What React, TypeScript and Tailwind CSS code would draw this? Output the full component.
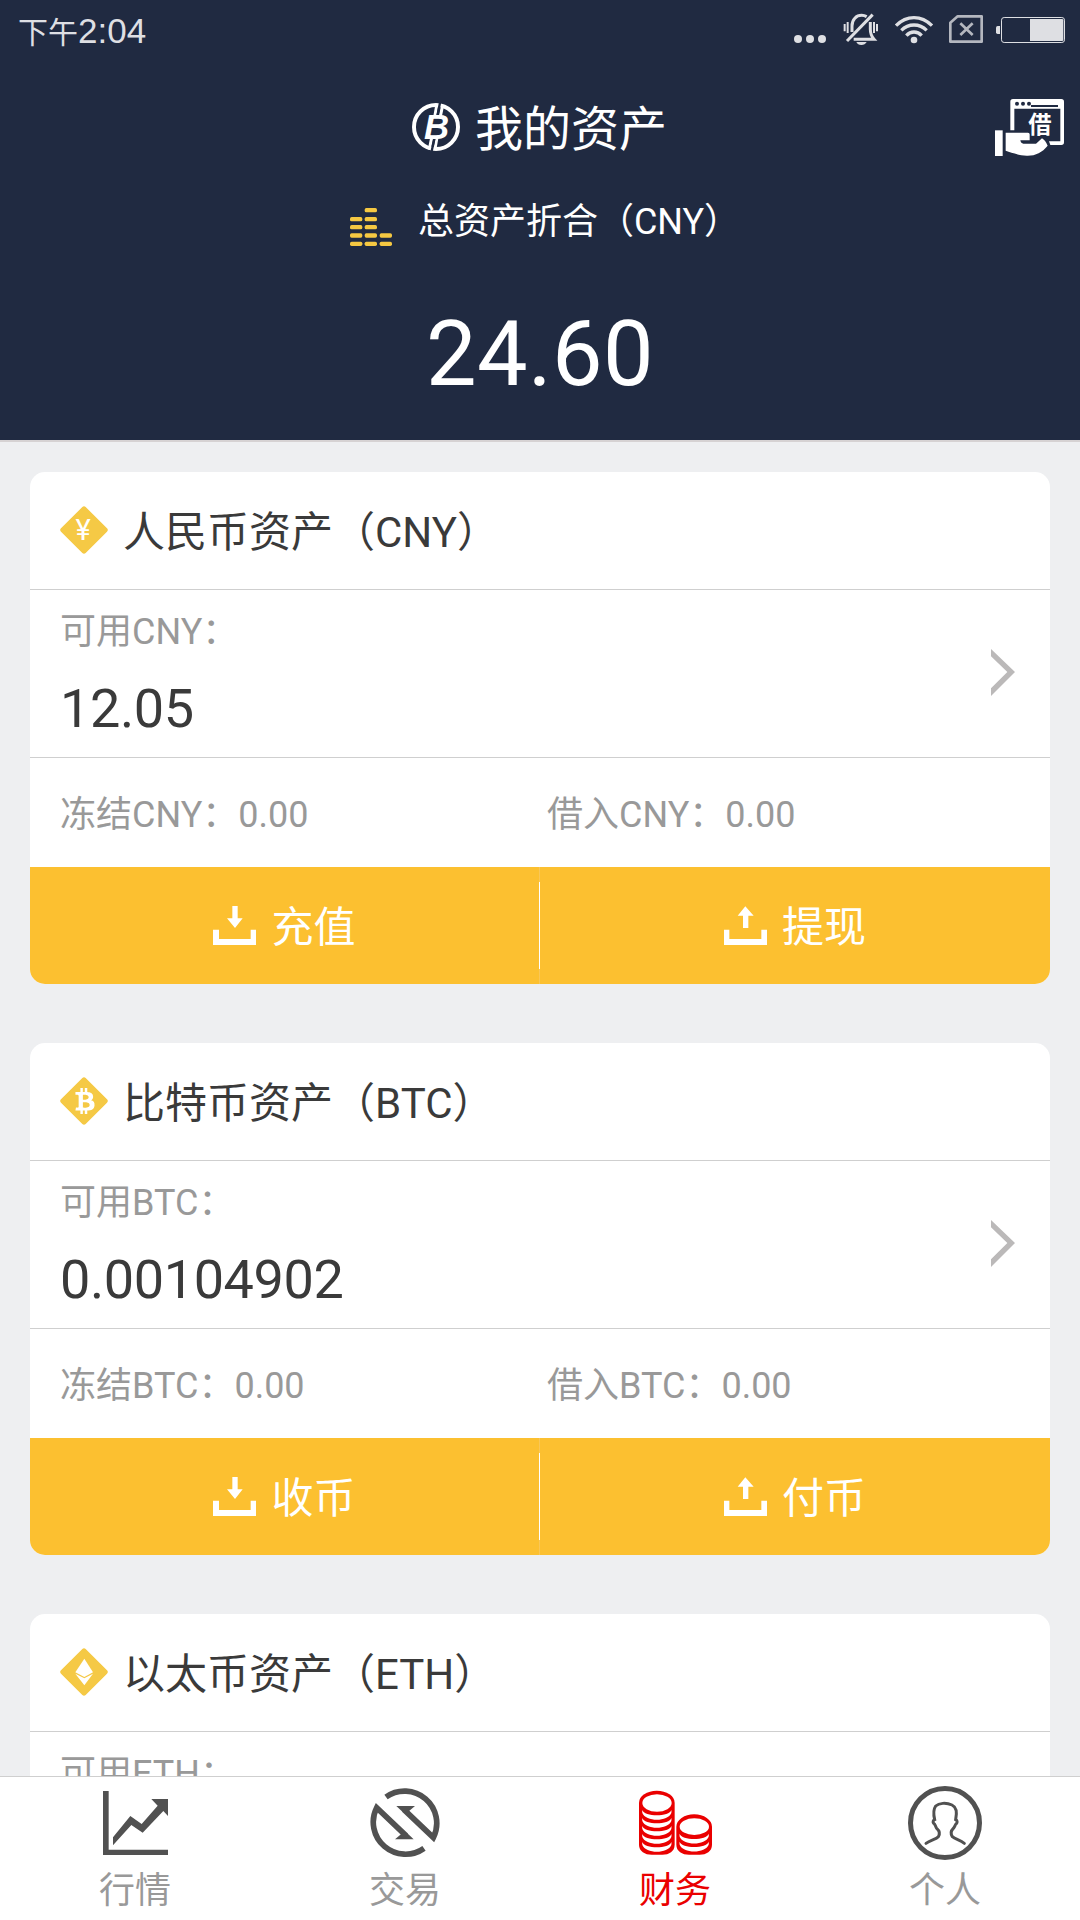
import type { ReactNode } from "react";
import { FaBtc } from "react-icons/fa";

interface Asset {
  code: string;
  name: string;
  available: string;
  frozen: string;
  borrowed: string;
  depositLabel: string;
  withdrawLabel: string;
  symbol: ReactNode;
}

interface Tab {
  label: string;
  icon: ReactNode;
  active?: boolean;
}

const StatusBar = () => (
  <div className="flex h-[60px] items-center justify-between pl-[18px] pr-[15px] text-[#dedfe3]">
    <div className="flex items-baseline pt-[3px] font-['Liberation_Sans','Noto_Sans_CJK_SC',sans-serif] text-[35px] leading-[40px]">
      <span className="text-[30px]">下午</span>
      <span>2:04</span>
    </div>
    <svg className="h-[60px] w-[272px]" viewBox="0 0 816 180" fill="none">
      <g fill="currentColor">
        <circle cx="15" cy="117" r="12" />
        <circle cx="51" cy="117" r="12" />
        <circle cx="87" cy="117" r="12" />
      </g>
      {/* muted bell */}
      <g stroke="currentColor">
        <path d="M177 96V78C177 58 190 46 206 46Q214 46 221 50" strokeWidth="9" />
        <path d="M232 66V88Q232 106 243 118H182" strokeWidth="9" />
        <path d="M162 123L239 44" strokeWidth="9" />
        <path d="M155 72V94M252 72V94" strokeWidth="6" />
        <path d="M164 66V99M243 66V99" strokeWidth="6" />
      </g>
      <path d="M190 126H221Q216 135 205 135T190 126Z" fill="currentColor" />
      {/* wifi */}
      <g stroke="currentColor" strokeWidth="10">
        <path d="M309 77Q333 53 363 53T417 77" />
        <path d="M325 91Q341 75 363 75T401 91" />
        <path d="M340 107Q350 96 363 96T386 107" />
      </g>
      <circle cx="363" cy="120" r="10" fill="currentColor" />
      {/* missing sim */}
      <g stroke="#b4b7bf" strokeWidth="8">
        <path d="M472 68L494 49H566V125H472Z" strokeLinejoin="round" />
        <path d="M502 70L539 105M539 70L502 105" />
      </g>
      {/* battery */}
      <rect x="625.5" y="52.5" width="189" height="75" rx="8" stroke="currentColor" strokeWidth="3" />
      <path d="M711 57H807Q811 57 811 61V119Q811 123 807 123H711Z" fill="currentColor" />
      <path d="M621 78H614Q609 78 609 83V97Q609 102 614 102H621Z" fill="currentColor" />
    </svg>
  </div>
);

const CoinLogo = () => (
  <svg className="mb-px h-12 w-12" viewBox="275 69 145 145" fill="none">
    <circle cx="347.5" cy="141.5" r="66.5" stroke="#fff" strokeWidth="12" />
    <path d="M350 74L344 108M368 74L361 108M334 176L327 210M350 176L344 210" stroke="#fff" strokeWidth="9" />
    <path d="M360 66L352 107M343 176L334 216" stroke="#202a41" strokeWidth="7" />
    <text
      x="311"
      y="178"
      fill="#fff"
      className="font-['Liberation_Sans',sans-serif] text-[105px] font-bold italic"
    >
      B
    </text>
  </svg>
);

const LoanIcon = () => (
  <svg className="h-[57px] w-[69px]" viewBox="705 297 207 171" fill="#fff">
    <path d="M751 391V305Q751 297 759 297H904Q912 297 912 305V427Q912 435 904 435H871L867 424H901V326H763V391Z" />
    <g fill="#202a41">
      <circle cx="771" cy="311" r="6" />
      <circle cx="789" cy="311" r="6" />
      <circle cx="807" cy="311" r="6" />
      <rect x="813" y="315" width="81" height="6" />
    </g>
    <rect x="705" y="391" width="23" height="77" />
    <path d="M737 398H804Q809 398 809 403V421H781Q783 431 790 431H828L846 415Q856 421 863 437C846 458 825 468 800 467C778 466 755 458 737 452Z" />
    <text x="805" y="399" className="font-['Noto_Sans_CJK_SC',sans-serif] text-[70px] font-bold">
      借
    </text>
  </svg>
);

// rows of coins in each of the three piles, bottom row first
const COIN_ROWS = [
  { x: 0, rows: [101, 76, 51, 27] },
  { x: 44, rows: [101, 76, 51, 27, 0] },
  { x: 89, rows: [101, 76] },
];

const CoinBars = () => (
  <svg className="mt-[10px] h-[38px] w-[42px]" viewBox="0 0 126 114" fill="#f5c842">
    {COIN_ROWS.map((pile) =>
      pile.rows.map((y) => (
        <rect key={`${pile.x}-${y}`} x={pile.x} y={y} width="37" height="13" rx="5" />
      ))
    )}
  </svg>
);

const Diamond = ({ children }: { children: ReactNode }) => (
  <div className="relative mb-[2px] h-12 w-12">
    <svg className="h-12 w-12" viewBox="0 0 144 144">
      <path
        d="M67 3Q72 -2 77 3L141 67Q146 72 141 77L77 141Q72 146 67 141L3 77Q-2 72 3 67Z"
        fill="#f5c945"
      />
    </svg>
    <div className="absolute inset-0 flex items-center justify-center text-white">{children}</div>
  </div>
);

const EthSymbol = () => (
  <svg className="h-12 w-12" viewBox="0 0 144 144" fill="#fff">
    <path d="M73 32L99 73L73 87L46 73Z" />
    <path d="M46 77L73 91L99 77L73 112Z" />
  </svg>
);

const DownloadIcon = () => (
  <svg className="h-[39px] w-[43px]" viewBox="0 0 129 117" fill="#fff">
    <path d="M0 71H18V99H113V71H129V117H0Z" />
    <path d="M58 0H74V37H89L66 66L42 37H58Z" />
  </svg>
);

const UploadIcon = () => (
  <svg className="h-[39px] w-[43px]" viewBox="0 0 129 117" fill="#fff">
    <path d="M0 71H16V99H112V71H129V117H0Z" />
    <path d="M57 66H73V29H89L64 1L41 29H57Z" />
  </svg>
);

const MarketIcon = () => (
  <svg className="h-16 w-[65px]" viewBox="249 573 195 192" fill="#515151">
    <path d="M249 573H266V749H444V765H249Z" />
    <path d="M279 712L331 648L365 672L413 617L394 597H444V648L430 633L368 698L334 675L279 736Z" />
  </svg>
);

const tradeArrow = (
  <>
    <path
      d="M1098 591A96.5 96.5 0 0 1 1240 713L1152 629"
      fill="none"
      stroke="#515151"
      strokeWidth="17"
      strokeMiterlimit="10"
    />
    <path d="M1129 618H1185L1160 639L1148 636Z" fill="#515151" />
  </>
);

const TradeIcon = () => (
  <svg className="h-[70px] w-[70px]" viewBox="1050 564 210 210">
    <g>{tradeArrow}</g>
    <g transform="rotate(180 1155 668)">{tradeArrow}</g>
  </svg>
);

const CRESCENT = "M127 151C132 172 209 172 214 151Q215 154 214 160C204 187 137 187 127 160Q126 154 127 151Z";

const FinanceIcon = () => (
  <svg className="mb-[2px] h-[65px] w-[73px]" viewBox="117 91 219 195">
    <g fill="#ea0000">
      <path d="M117 129V255C117 275 135 285 155 285H187C207 285 224 275 224 255V129A53.5 36 0 0 0 117 129Z" />
      <path d="M229 201V255C229 275 247 285 267 285H299C319 285 336 275 336 255V201A53.5 37 0 0 0 229 201Z" />
    </g>
    <g fill="#fff">
      <ellipse cx="171" cy="130" rx="44" ry="26" />
      <ellipse cx="283" cy="201" rx="44" ry="25" />
      {[0, 24, 48, 72, 96].map((dy) => (
        <path key={dy} d={CRESCENT} transform={`translate(0 ${dy})`} />
      ))}
      {[71, 95].map((dy) => (
        <path key={dy} d={CRESCENT} transform={`translate(112 ${dy})`} />
      ))}
    </g>
  </svg>
);

const ProfileIcon = () => (
  <svg className="h-[74px] w-[74px]" viewBox="924 78 222 222" fill="none" stroke="#515151">
    <circle cx="1035" cy="189" r="103.5" strokeWidth="15" />
    <path
      d="M978 250C991 240 1008 238 1015 230C1021 220 1017 211 1010 205C1006 199 1006 193 1001 190C998 186 999 181 1004 179C1000 162 1000 148 1007 138C1017 129 1038 127 1056 135C1071 142 1071 160 1067 179C1072 181 1072 186 1070 190C1065 193 1065 200 1060 205C1053 212 1052 222 1057 230C1066 238 1080 240 1093 250"
      strokeWidth="9"
      strokeLinecap="round"
    />
  </svg>
);

const assets: Asset[] = [
  {
    code: "CNY",
    name: "人民币资产",
    available: "12.05",
    frozen: "0.00",
    borrowed: "0.00",
    depositLabel: "充值",
    withdrawLabel: "提现",
    symbol: <span className="pr-[2px] text-[29px] leading-[48px]">¥</span>,
  },
  {
    code: "BTC",
    name: "比特币资产",
    available: "0.00104902",
    frozen: "0.00",
    borrowed: "0.00",
    depositLabel: "收币",
    withdrawLabel: "付币",
    symbol: <FaBtc className="ml-[2px] h-[26px] w-[20px]" />,
  },
  {
    code: "ETH",
    name: "以太币资产",
    available: "0.00",
    frozen: "0.00",
    borrowed: "0.00",
    depositLabel: "收币",
    withdrawLabel: "付币",
    symbol: <EthSymbol />,
  },
];

const tabs: Tab[] = [
  { label: "行情", icon: <MarketIcon /> },
  { label: "交易", icon: <TradeIcon /> },
  { label: "财务", icon: <FinanceIcon />, active: true },
  { label: "个人", icon: <ProfileIcon /> },
];

const AssetCard = ({ asset }: { asset: Asset }) => (
  <section className="h-[512px] shrink-0 overflow-hidden rounded-[15px] bg-white">
    <div className="flex h-[118px] items-center gap-[15px] border-b border-[#cfcfcf] px-[30px]">
      <Diamond>{asset.symbol}</Diamond>
      <h2 className="pt-1 text-[42px] leading-[50px] text-[#3a3a3a]">
        {asset.name}（{asset.code}）
      </h2>
    </div>

    <div className="flex h-[168px] items-center justify-between border-b border-[#cfcfcf] pl-[30px] pr-[35px]">
      <div className="h-full pt-5">
        <p className="text-[36px] leading-[44px] text-[#999]">可用{asset.code}：</p>
        <p className="mt-[23px] text-[54px] leading-[64px] tracking-[-0.4px] text-[#3a3a3a]">
          {asset.available}
        </p>
      </div>
      <svg className="mb-[2px] h-[47px] w-6" viewBox="0 0 72 141" fill="#bbb9b9">
        <path d="M0 0L72 69L0 141V118L49 69L0 22Z" />
      </svg>
    </div>

    <div className="flex h-[109px] items-center pl-[30px] pt-[5px] text-[36px] leading-[44px] text-[#999]">
      <p className="w-[487px]">
        冻结{asset.code}：{asset.frozen}
      </p>
      <p>
        借入{asset.code}：{asset.borrowed}
      </p>
    </div>

    <div className="flex h-[117px] items-center bg-[#fcc030] text-[42px] leading-[50px] text-white">
      <button className="flex h-full w-[509px] items-center justify-center gap-[15px]">
        <DownloadIcon />
        <span className="pt-[5px]">{asset.depositLabel}</span>
      </button>
      <div className="flex h-full w-px items-center bg-[#f9c758]">
        <div className="h-[87px] w-px bg-white" />
      </div>
      <button className="flex h-full flex-1 items-center justify-center gap-[15px]">
        <UploadIcon />
        <span className="pt-[5px]">{asset.withdrawLabel}</span>
      </button>
    </div>
  </section>
);

const App = () => {
  return (
    <div className="flex h-[1920px] w-[1080px] flex-col overflow-hidden bg-[#eeeff1] font-['Roboto','Noto_Sans_CJK_SC',sans-serif]">
      <header className="h-[442px] shrink-0 border-b-2 border-[#d6d2d3] bg-[#202a41] text-white">
        <StatusBar />
        <div className="grid h-[135px] grid-cols-[1fr_auto_1fr] items-center">
          <div />
          <div className="flex items-center gap-[15px] pr-px">
            <CoinLogo />
            <h1 className="pt-[4px] text-[48px] leading-[56px]">我的资产</h1>
          </div>
          <button className="justify-self-end pr-4">
            <LoanIcon />
          </button>
        </div>
        <div className="flex h-[54px] items-center justify-center gap-[26px] pl-[10px]">
          <CoinBars />
          <p className="text-[36px] leading-[44px]">总资产折合（CNY）</p>
        </div>
        <p className="flex h-[191px] items-center justify-center pt-5 text-[90px] leading-[106px] tracking-[0.4px]">
          24.60
        </p>
      </header>

      <main className="flex min-h-0 flex-1 flex-col gap-[59px] overflow-hidden px-[30px] pt-[30px]">
        {assets.map((asset) => (
          <AssetCard key={asset.code} asset={asset} />
        ))}
      </main>

      <nav className="grid h-[144px] shrink-0 grid-cols-4 border-t border-[#cfcfcf] bg-white">
        {tabs.map((tab) => (
          <button key={tab.label} className="flex flex-col items-center">
            <span className="flex h-[92px] items-center">{tab.icon}</span>
            <span
              className={`text-[36px] leading-[44px] ${
                tab.active ? "text-[#ea0000]" : "text-[#999]"
              }`}
            >
              {tab.label}
            </span>
          </button>
        ))}
      </nav>
    </div>
  );
};

export default App;
